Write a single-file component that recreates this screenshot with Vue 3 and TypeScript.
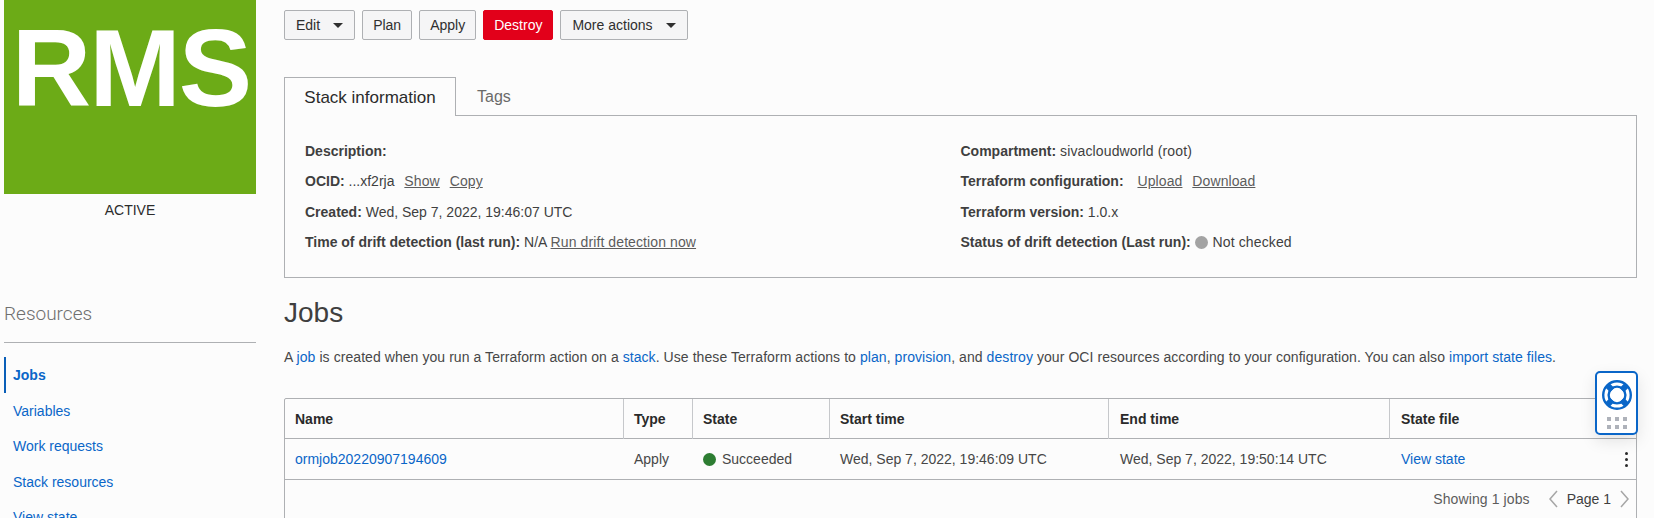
<script setup lang="ts">
const actions = [
  { label: 'Edit', caret: true },
  { label: 'Plan' },
  { label: 'Apply' },
  { label: 'Destroy', danger: true },
  { label: 'More actions', caret: true },
]
const resources = ['Jobs', 'Variables', 'Work requests', 'Stack resources', 'View state']
const columns = ['Name', 'Type', 'State', 'Start time', 'End time', 'State file']
</script>

<template>
  <div class="page">
    <aside class="side">
      <div class="logo">RMS</div>
      <div class="status">ACTIVE</div>
      <h2 class="res-title">Resources</h2>
      <ul class="res-list">
        <li v-for="(r, i) in resources" :key="r" :class="{ active: i === 0 }">{{ r }}</li>
      </ul>
    </aside>

    <main class="main">
      <div class="actions">
        <button v-for="a in actions" :key="a.label" class="btn" :class="{ danger: a.danger, caret: a.caret }">
          {{ a.label }}<span v-if="a.caret" class="tri"></span>
        </button>
      </div>

      <div class="tabs">
        <div class="tab current">Stack information</div>
        <div class="tab">Tags</div>
        <div class="tab-rest"></div>
      </div>
      <section class="panel">
        <div class="col">
          <p><b>Description:</b></p>
          <p><b>OCID:</b> ...xf2rja <a class="u first">Show</a> <a class="u">Copy</a></p>
          <p><b>Created:</b> Wed, Sep 7, 2022, 19:46:07 UTC</p>
          <p><b>Time of drift detection (last run):</b> N/A <a class="u tight">Run drift detection now</a></p>
        </div>
        <div class="col">
          <p><b>Compartment:</b> <span class="val">sivacloudworld (root)</span></p>
          <p><b>Terraform configuration:</b> <a class="u wide">Upload</a> <a class="u">Download</a></p>
          <p><b>Terraform version:</b> 1.0.x</p>
          <p><b>Status of drift detection (Last run):</b> <span class="dot grey"></span> <span class="val">Not checked</span></p>
        </div>
      </section>

      <h1 class="jobs">Jobs</h1>
      <p class="intro">
        A <a>job</a> is created when you run a Terraform action on a <a>stack</a>. Use these Terraform actions to
        <a>plan</a>, <a>provision</a>, and <a>destroy</a> your OCI resources according to your configuration. You can
        also <a>import state files</a>.
      </p>

      <div class="table">
        <div class="row head">
          <div v-for="c in columns" :key="c" class="cell">{{ c }}</div>
        </div>
        <div class="row">
          <div class="cell"><a>ormjob20220907194609</a></div>
          <div class="cell">Apply</div>
          <div class="cell"><span class="dot green"></span>Succeeded</div>
          <div class="cell">Wed, Sep 7, 2022, 19:46:09 UTC</div>
          <div class="cell">Wed, Sep 7, 2022, 19:50:14 UTC</div>
          <div class="cell last">
            <a>View state</a>
            <span class="kebab"><i></i><i></i><i></i></span>
          </div>
        </div>
        <div class="foot">
          <span class="showing">Showing 1 jobs</span>
          <svg class="chev" width="10" height="20" viewBox="0 0 10 20"><path d="M9 2 2 10l7 8" /></svg>
          <span class="pageno">Page 1</span>
          <svg class="chev" width="10" height="20" viewBox="0 0 10 20"><path d="M1 2l7 8-7 8" /></svg>
        </div>
      </div>
    </main>

    <div class="help">
      <svg width="32" height="32" viewBox="0 0 32 32">
        <circle cx="16" cy="16" r="13.8" fill="none" stroke="#0a66c8" stroke-width="2.4" />
        <circle cx="16" cy="16" r="8.4" fill="none" stroke="#0a66c8" stroke-width="2.4" />
        <g stroke="#0a66c8" stroke-width="6">
          <path d="M6.2 6.2l5 5M25.8 6.2l-5 5M6.2 25.8l5-5M25.8 25.8l-5-5" />
        </g>
      </svg>
      <div class="grip"><i v-for="n in 6" :key="n"></i></div>
    </div>
  </div>
</template>

<style scoped>
.page {
  position: relative;
  display: flex;
  height: 518px;
  overflow: hidden;
  background: #fcfcfc;
  color: #3f3f3f;
  font: 14px/20px "Liberation Sans", Arial, sans-serif;
}
.side {
  width: 252px;
  margin-left: 4px;
  flex: none;
}
.logo {
  height: 194px;
  background: #6cab17;
  color: #fff;
  font-size: 110px;
  font-weight: 700;
  letter-spacing: -2px;
  line-height: 135px;
  text-align: center;
  text-indent: 2px;
}
.status {
  margin-top: 6px;
  text-align: center;
  color: #2c2c2c;
  line-height: 20px;
}
.res-title {
  margin: 82px 0 0;
  padding-bottom: 16px;
  border-bottom: 1px solid #aeb0b3;
  color: #6f6f6f;
  font-family: Roboto, "Liberation Sans", sans-serif;
  font-size: 19px;
  font-weight: 300;
  line-height: 24px;
}
.res-list {
  list-style: none;
  margin: 14px 0 0;
  padding: 0;
  color: #0a66c8;
}
.res-list li {
  height: 35.5px;
  padding-left: 9px;
  line-height: 36px;
}
.res-list li.active {
  border-left: 2px solid #0a5fb8;
  padding-left: 7px;
  font-weight: 700;
}
.main {
  width: 1353px;
  margin-left: 28px;
  flex: none;
}
.actions {
  display: flex;
  gap: 7px;
  margin-top: 10px;
}
.btn {
  height: 30px;
  padding: 0 10px;
  border: 1px solid #aeb0b3;
  border-radius: 2px;
  background: #f5f5f6;
  color: #2f2f2f;
  font: inherit;
  display: flex;
  align-items: center;
}
.btn.caret {
  padding: 0 11px;
}
.btn.danger {
  background: #e2001a;
  border-color: #e2001a;
  color: #fff;
}
.tri {
  width: 0;
  height: 0;
  margin-left: 13px;
  border-left: 5px solid transparent;
  border-right: 5px solid transparent;
  border-top: 5px solid #2f2f2f;
}
.tabs {
  display: flex;
  margin-top: 37px;
  height: 39px;
}
.tab {
  padding: 0 21px;
  font-size: 16px;
  line-height: 39px;
  color: #6a6a6a;
  border-bottom: 1px solid #aeb0b3;
}
.tab.current {
  width: 172px;
  box-sizing: border-box;
  padding: 0;
  text-align: center;
  color: #2b2b2b;
  font-size: 17px;
  line-height: 39px;
  border: 1px solid #aeb0b3;
  border-bottom: 0;
  background: #fcfcfc;
}
.tab-rest {
  flex: 1;
  border-bottom: 1px solid #aeb0b3;
}
.panel {
  display: flex;
  box-sizing: border-box;
  height: 162px;
  padding: 20px 20px 0;
  border: 1px solid #aeb0b3;
  border-top: 0;
}
.col {
  width: 656px;
}
.col p {
  margin: 0;
  height: 30.3px;
  line-height: 30px;
  white-space: nowrap;
}
.u {
  text-decoration: underline;
  color: #5c5c5c;
  letter-spacing: 0.1px;
}
.val {
  letter-spacing: 0.13px;
}
.u.first {
  margin-left: 6px;
}
.u.first + .u {
  margin-left: 6px;
}
.u.wide {
  margin-left: 10px;
}
.u.wide + .u {
  margin-left: 6px;
}
.dot {
  display: inline-block;
  width: 13px;
  height: 13px;
  border-radius: 50%;
  vertical-align: -2px;
}
.dot.grey {
  background: #a3a3a3;
  margin-right: 1px;
}
.dot.green {
  background: #2d7d32;
  margin-right: 6px;
}
.jobs {
  margin: 17px 0 0;
  font-size: 28px;
  font-weight: 400;
  line-height: 36px;
  color: #3f3f3f;
}
.intro {
  margin: 16px 0 0;
  line-height: 20px;
  white-space: nowrap;
  letter-spacing: 0.065px;
  color: #474747;
}
.intro a,
.row a {
  color: #0a66c8;
}
.table {
  margin-top: 31px;
  border: 1px solid #aeb0b3;
  border-radius: 2px 2px 0 0;
}
.row {
  display: grid;
  grid-template-columns: 339px 69px 137px 279px 281px 1fr;
  height: 41px;
  box-sizing: border-box;
  border-bottom: 1px solid #aeb0b3;
}
.row.head {
  height: 40px;
}
.cell {
  padding: 0 10px;
  line-height: 40px;
  white-space: nowrap;
  color: #474747;
}
.cell:nth-child(n + 5) {
  padding-left: 11px;
}
.head .cell {
  font-weight: 700;
  color: #2a2a2a;
  border-right: 1px solid #c6c8cb;
}
.head .cell:last-child {
  border-right: 0;
}
.cell.last {
  display: flex;
  justify-content: space-between;
  align-items: center;
}
.kebab {
  display: flex;
  flex-direction: column;
  gap: 3px;
  margin-right: -2px;
}
.kebab i {
  width: 3px;
  height: 3px;
  border-radius: 50%;
  background: #2a2a2a;
}
.foot {
  display: flex;
  align-items: center;
  justify-content: flex-end;
  height: 38px;
  padding-right: 6px;
  color: #5c5c5c;
}
.showing {
  margin-right: 18px;
  letter-spacing: 0.1px;
}
.pageno {
  margin: 0 9px 0 9px;
  color: #3f3f3f;
}
.chev path {
  fill: none;
  stroke: #a6a6a6;
  stroke-width: 1.5;
}
.help {
  position: absolute;
  left: 1595px;
  top: 371px;
  width: 43px;
  height: 64px;
  box-sizing: border-box;
  padding-top: 6px;
  border: 2px solid #0a66c8;
  border-radius: 5px;
  background: #fff;
  box-shadow: 0 6px 16px rgba(0, 0, 0, 0.1);
  display: flex;
  flex-direction: column;
  align-items: center;
}
.grip {
  display: grid;
  grid-template-columns: repeat(3, 4px);
  gap: 4px;
  margin-top: 6px;
}
.grip i {
  height: 4px;
  background: #aeb2ba;
}
</style>

<style>
html,
body {
  background: #fcfcfc;
}
</style>
